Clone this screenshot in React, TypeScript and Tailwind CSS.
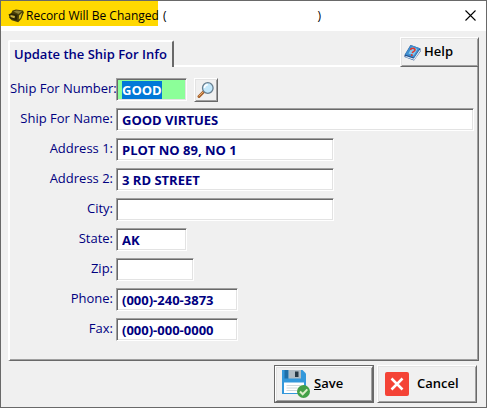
// core
import { FormEvent, ReactNode, useEffect, useRef, useState } from 'react'
// libraries
import clsx from 'clsx'

interface IField {
  name: string
  label: string
  width: string
}

const FIELDS: IField[] = [
  { name: 'number', label: 'Ship For Number:', width: 'w-[71px]' },
  { name: 'name', label: 'Ship For Name:', width: 'flex-1' },
  { name: 'address1', label: 'Address 1:', width: 'w-[218px]' },
  { name: 'address2', label: 'Address 2:', width: 'w-[218px]' },
  { name: 'city', label: 'City:', width: 'w-[218px]' },
  { name: 'state', label: 'State:', width: 'w-[71px]' },
  { name: 'zip', label: 'Zip:', width: 'w-[78px]' },
  { name: 'phone', label: 'Phone:', width: 'w-[122px]' },
  { name: 'fax', label: 'Fax:', width: 'w-[122px]' },
]

const INITIAL_VALUES: Record<string, string> = {
  number: 'GOOD',
  name: 'GOOD VIRTUES',
  address1: 'PLOT NO 89, NO 1',
  address2: '3 RD STREET',
  city: '',
  state: 'AK',
  zip: '',
  phone: '(000)-240-3873',
  fax: '(000)-000-0000',
}

// two pixel bevels, the second pixel is an inset shadow
const RAISED =
  'border border-t-white border-l-white border-b-[#696969] border-r-[#696969] bg-[#f0f0f0] shadow-[inset_1px_1px_0_#e3e3e3,inset_-1px_-1px_0_#a0a0a0]'
const SUNKEN =
  'border border-t-[#a0a0a0] border-l-[#a0a0a0] border-b-white border-r-white shadow-[inset_1px_1px_0_#696969,inset_-1px_-1px_0_#e3e3e3]'

const AppIcon = () => (
  <svg width="16" height="14" viewBox="0 0 16 14" className="shrink-0">
    <path d="M4.500 1.500 8 .5l7 1 .8 2-2.600 6.500-3 3.200-6.500-2L1 8.500z" fill="#4a3f08" />
    <path d="M5.500 2.500 8.500 1.500l5.500.8L10.500 5z" fill="#8d8135" />
    <path d="M.5 5.500 3 4.300l6.500 1.500-.8 5.700-6-1.800z" fill="#2b2503" />
    <path d="m2.500 6 4.500 1-.5 2.200-4-1.200z" fill="#c9b040" />
    <path d="m11 6.500 3.200-3-1.700 5.500-1.700 1.500z" fill="#d8bc20" />
  </svg>
)

const HelpIcon = () => (
  <svg width="17" height="17" viewBox="0 0 17 17" className="shrink-0">
    <path d="M.5 11 6.500 1 16.500 4.500v3L10 16.500.5 13z" fill="#24518f" />
    <path d="m1.500 12.500 8.500 2.800 6-9" fill="none" stroke="#dbe9f6" strokeWidth="1.300" />
    <path d="M1 10.500 6.800 1 16 4.300 10 13.500z" fill="#3f8fd0" />
    <path d="m4.500 9.500 3.500-6.500 5.500 2-3.700 6.500z" fill="#86c8ee" />
    <path
      d="M6.500 6C7 3.500 11.300 4 11 6 10.800 7.500 8.800 7.200 8.300 9"
      fill="none"
      stroke="#e0352b"
      strokeWidth="1.600"
    />
    <circle cx="7.800" cy="11" r="1" fill="#e0352b" />
  </svg>
)

const LookupIcon = () => (
  <svg width="18" height="18" viewBox="0 0 18 18">
    <path d="m7 10.500-5 5" stroke="#a8622c" strokeWidth="3" strokeLinecap="round" />
    <path d="m6.500 10.500-4.500 4.500" stroke="#e8b070" strokeWidth="1" strokeLinecap="round" />
    <circle cx="10.800" cy="7" r="5.300" fill="#c4e8fb" stroke="#687f90" strokeWidth="1.300" />
    <path d="M7.500 7A3.300 3.300 0 0 1 10.800 3.700" fill="none" stroke="#fff" strokeWidth="1.500" />
  </svg>
)

const SaveIcon = () => (
  <svg width="28" height="28" viewBox="0 0 28 28" className="shrink-0">
    <path d="M0 0h20.500L24 3.500V24H0z" fill="#3498db" />
    <path d="M2.500 0h4v8.500h-4z" fill="#1f6fa8" />
    <path d="M6.500 0H19v8.500H6.500z" fill="#b0bcc4" />
    <path d="M13 1.500h3.500v5.500H13z" fill="#263844" />
    <path d="M2 12.500h20V23H2z" fill="#fff" />
    <path d="M4.500 15.500h14M4.500 18h11M4.500 20.500h11" stroke="#cfd8dc" />
    <circle cx="21.500" cy="21.500" r="6.500" fill="#43a047" />
    <path d="m18 21.500 2.700 2.700 4.600-4.800" fill="none" stroke="#dcedc8" strokeWidth="2" />
  </svg>
)

const CancelIcon = () => (
  <svg width="24" height="24" viewBox="0 0 24 24" className="shrink-0">
    <rect width="24" height="24" rx="2" fill="#f44336" />
    <path d="m6.500 6.500 11 11m0-11-11 11" stroke="#fff" strokeWidth="2.500" />
  </svg>
)

interface IBevelButtonProps {
  type?: 'button' | 'submit'
  label?: string
  className?: string
  onClick?: () => void
  children: ReactNode
}

const BevelButton = ({ type = 'button', label, className, onClick, children }: IBevelButtonProps) => (
  <button
    type={type}
    aria-label={label}
    onClick={onClick}
    className={clsx('flex items-center text-black', RAISED, className)}>
    {children}
  </button>
)

export default function App() {
  const [values, setValues] = useState(INITIAL_VALUES)
  const numberRef = useRef<HTMLInputElement>(null)

  useEffect(() => {
    numberRef.current?.focus()
    numberRef.current?.select()
  }, [])

  const handleSubmit = (e: FormEvent) => {
    e.preventDefault()
  }

  return (
    <div className="flex min-h-screen flex-col border border-[#696969] bg-[#f0f0f0] font-['Open_Sans','Noto_Sans',sans-serif]">
      <header className="flex h-[30px] items-start bg-white text-xs text-black">
        <h1 className="flex h-[25px] w-[157px] items-center gap-0.5 bg-[#ffd800] pl-[7px] pt-1 whitespace-nowrap">
          <AppIcon />
          Record Will Be Changed
        </h1>
        <p className="flex h-[25px] w-[163px] items-center justify-between pl-[5px] pt-1">
          <span>(</span>
          <span>)</span>
        </p>
        <button type="button" aria-label="Close" className="ml-auto mt-2 mr-[9px] p-px">
          <svg width="11" height="11" viewBox="0 0 11 11">
            <path d="m.5.5 10 10m0-10-10 10" stroke="#000" strokeWidth="1.100" />
          </svg>
        </button>
      </header>

      <form className="px-[7px] pt-1.5" onSubmit={handleSubmit}>
        <div className="relative z-10 -mb-0.5 flex items-end justify-between">
          <h2 className="flex h-[27px] w-[166px] items-center rounded-t-xs border-t-2 border-l-2 border-r-2 border-t-white border-l-white border-r-[#696969] bg-[#f0f0f0] pl-1 text-[13px] font-semibold whitespace-nowrap text-[#000080]">
            Update the Ship For Info
          </h2>
          <BevelButton className="h-[30px] w-[79px] gap-[3px] pl-[3px] text-[13px] font-semibold">
            <HelpIcon />
            Help
          </BevelButton>
        </div>

        <div
          className={clsx(
            'flex flex-col gap-[7px] pt-[11px] pr-1 pb-[19px]',
            'border border-t-2 border-l-2 border-t-white border-l-white border-b-[#696969] border-r-[#696969] shadow-[inset_-1px_-1px_0_#a0a0a0]'
          )}>
          {FIELDS.map((field) => (
            <div key={field.name} className="flex h-[23px] items-center">
              <label
                htmlFor={field.name}
                className="w-[106px] shrink-0 pr-[3px] pb-1 text-right text-[13px]/5 whitespace-nowrap text-[#000080]">
                {field.label}
              </label>
              <input
                id={field.name}
                ref={field.name === 'number' ? numberRef : undefined}
                type="text"
                value={values[field.name]}
                onChange={(e) => setValues({ ...values, [field.name]: e.target.value })}
                className={clsx(
                  'h-full min-w-0 bg-white pl-[5px] text-[13px] font-bold text-[#000080] outline-none selection:bg-[#0078d7] selection:text-white focus:bg-[#8cff99]',
                  SUNKEN,
                  field.width
                )}
              />
              {field.name === 'number' && (
                <BevelButton
                  label="Look up ship for number"
                  className="ml-[7px] size-6 shrink-0 justify-center">
                  <LookupIcon />
                </BevelButton>
              )}
            </div>
          ))}
        </div>

        <div className="mt-1 flex justify-end gap-[3px] pr-0.5 text-[13px] font-semibold">
          <div className="border border-[#696969]">
            <BevelButton type="submit" className="h-9 w-[98px] gap-1 pl-1.5">
              <SaveIcon />
              <span>
                <u>S</u>ave
              </span>
            </BevelButton>
          </div>
          <BevelButton className="h-[38px] w-[100px] gap-2 pl-[7px]">
            <CancelIcon />
            Cancel
          </BevelButton>
        </div>
      </form>
    </div>
  )
}
